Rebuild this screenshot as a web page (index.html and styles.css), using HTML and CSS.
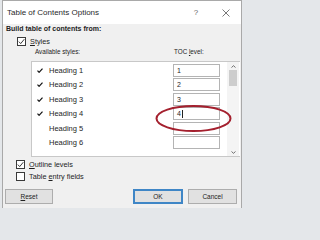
FILE: index.html
```html
<!DOCTYPE html>
<html>
<head>
<meta charset="utf-8">
<link rel="stylesheet" href="styles.css">
</head>
<body>
<div class="dialog">
  <div class="titlebar">
    <span class="title">Table of Contents Options</span>
    <span class="tb-btn help">?</span>
    <span class="tb-btn close"><svg width="8" height="8" viewBox="0 0 8 8"><path d="M0.5 0.5 L7.5 7.5 M7.5 0.5 L0.5 7.5" stroke="#555" stroke-width="0.8" fill="none"/></svg></span>
  </div>
  <div class="content">
    <div class="group-label">Build table of contents from:</div>
    <div class="check-row styles-row">
      <span class="box"><svg width="7" height="7" viewBox="0 0 7 7"><path d="M0.8 3.6 L2.7 5.6 L6.3 1.2" stroke="#222" stroke-width="0.9" fill="none"/></svg></span>
      <span class="check-label"><u>S</u>tyles</span>
    </div>
    <div class="list-head">
      <span class="avail">Available styles:</span>
      <span class="toc">TOC <u>l</u>evel:</span>
    </div>
    <div class="list">
      <div class="rows">
        <div class="row"><span class="tick"><svg width="6" height="5" viewBox="0 0 6 5"><path d="M0.5 2.6 L2.1 4.3 L5.5 0.6" stroke="#111" stroke-width="1.2" fill="none"/></svg></span><span class="name">Heading 1</span><span class="level">1</span></div>
        <div class="row"><span class="tick"><svg width="6" height="5" viewBox="0 0 6 5"><path d="M0.5 2.6 L2.1 4.3 L5.5 0.6" stroke="#111" stroke-width="1.2" fill="none"/></svg></span><span class="name">Heading 2</span><span class="level">2</span></div>
        <div class="row"><span class="tick"><svg width="6" height="5" viewBox="0 0 6 5"><path d="M0.5 2.6 L2.1 4.3 L5.5 0.6" stroke="#111" stroke-width="1.2" fill="none"/></svg></span><span class="name">Heading 3</span><span class="level">3</span></div>
        <div class="row"><span class="tick"><svg width="6" height="5" viewBox="0 0 6 5"><path d="M0.5 2.6 L2.1 4.3 L5.5 0.6" stroke="#111" stroke-width="1.2" fill="none"/></svg></span><span class="name">Heading 4</span><span class="level">4<span class="caret"></span></span></div>
        <div class="row"><span class="tick"></span><span class="name">Heading 5</span><span class="level"></span></div>
        <div class="row"><span class="tick"></span><span class="name">Heading 6</span><span class="level"></span></div>
      </div>
      <div class="scrollbar">
        <span class="arrow"><svg width="5" height="3" viewBox="0 0 5 3"><path d="M0.5 2.5 L2.5 0.7 L4.5 2.5" stroke="#606060" stroke-width="0.9" fill="none"/></svg></span>
        <span class="thumb"></span>
        <span class="track"></span>
        <span class="arrow"><svg width="5" height="3" viewBox="0 0 5 3"><path d="M0.5 0.5 L2.5 2.3 L4.5 0.5" stroke="#606060" stroke-width="0.9" fill="none"/></svg></span>
      </div>
    </div>
    <div class="check-row outline-row">
      <span class="box"><svg width="7" height="7" viewBox="0 0 7 7"><path d="M0.8 3.6 L2.7 5.6 L6.3 1.2" stroke="#222" stroke-width="0.9" fill="none"/></svg></span>
      <span class="check-label"><u>O</u>utline levels</span>
    </div>
    <div class="check-row entry-row">
      <span class="box"></span>
      <span class="check-label">Table <u>e</u>ntry fields</span>
    </div>
    <div class="buttons">
      <span class="btn reset"><u>R</u>eset</span>
      <span class="spacer"></span>
      <span class="btn ok">OK</span>
      <span class="btn cancel">Cancel</span>
    </div>
  </div>
</div>
<svg class="annotation" width="242" height="208" viewBox="0 0 242 208"><ellipse cx="193.5" cy="118.5" rx="37" ry="12.5" fill="none" stroke="#a4202e" stroke-width="2"/></svg>
</body>
</html>
```
FILE: styles.css
```css
html, body {
  margin: 0;
  padding: 0;
}
body {
  width: 242px;
  height: 208px;
  overflow: hidden;
  background: #e4e7ea;
  font-family: "Liberation Sans", Arial, sans-serif;
  color: #1e1e1e;
  position: relative;
}
.dialog {
  margin-left: 2px;
  width: 240px;
  height: 209px;
  box-sizing: border-box;
  border: 1px solid #a9a9a9;
  background: #f0f0f0;
}
.titlebar {
  height: 23px;
  background: #fff;
  display: flex;
  align-items: center;
  padding-left: 4px;
}
.title {
  font-size: 8px;
  color: #2a2a2a;
  flex: 1;
}
.tb-btn {
  width: 30px;
  height: 23px;
  display: flex;
  align-items: center;
  justify-content: center;
}
.help {
  font-size: 8px;
  color: #666;
}
.content {
  display: flex;
  flex-direction: column;
  padding-right: 1px;
}
.group-label {
  font-size: 7px;
  font-weight: bold;
  line-height: 10px;
  padding-left: 3px;
  color: #222;
}
.check-row {
  display: flex;
  align-items: center;
  height: 9px;
}
.box {
  width: 9px;
  height: 9px;
  box-sizing: border-box;
  border: 1px solid #3a3a3a;
  background: #fff;
  display: flex;
  align-items: center;
  justify-content: center;
}
.check-label {
  font-size: 7.3px;
  margin-left: 4px;
}
.styles-row {
  margin-top: 3px;
  padding-left: 14px;
}
.styles-row .check-label {
  margin-left: 4px;
}
.list-head {
  margin-top: 2px;
  height: 8px;
  line-height: 8px;
  font-size: 6.3px;
  display: flex;
  padding-left: 32px;
}
.avail {
  width: 139px;
}
.list {
  margin-top: 5px;
  margin-left: 28px;
  height: 96px;
  box-sizing: border-box;
  border: 1px solid #c8c8c8;
  border-right: none;
  background: #fff;
  display: flex;
}
.rows {
  flex: 1;
  padding-top: 1px;
}
.row {
  height: 14.5px;
  display: grid;
  grid-template-columns: 17px 124px 47px;
  align-items: center;
}
.tick {
  padding-left: 5px;
  display: flex;
  align-items: center;
}
.name {
  font-size: 7.5px;
}
.level {
  height: 13px;
  box-sizing: border-box;
  border: 1px solid #b4b4b4;
  background: #fff;
  font-size: 7px;
  line-height: 11px;
  padding-left: 3px;
  display: flex;
  align-items: center;
}
.caret {
  width: 1px;
  height: 8px;
  background: #222;
  margin-left: 1px;
}
.scrollbar {
  width: 12px;
  margin-right: 1px;
  background: #f4f4f4;
  display: flex;
  flex-direction: column;
  align-items: center;
}
.arrow {
  height: 8px;
  display: flex;
  align-items: center;
  justify-content: center;
}
.thumb {
  width: 8px;
  height: 16px;
  background: #cdcdcd;
  margin-top: 0px;
}
.track {
  flex: 1;
}
.outline-row {
  margin-top: 3px;
  padding-left: 13px;
}
.entry-row {
  margin-top: 3px;
  padding-left: 13px;
}
.buttons {
  margin-top: 8px;
  display: flex;
  gap: 5px;
  padding-left: 2px;
  padding-right: 3px;
}
.spacer {
  flex: 1;
}
.btn {
  height: 15px;
  box-sizing: border-box;
  border: 1px solid #adadad;
  background: #e1e1e1;
  font-size: 6.5px;
  display: flex;
  align-items: center;
  justify-content: center;
  color: #222;
}
.reset {
  width: 48px;
}
.ok {
  width: 50px;
  border: 2px solid #3f86c6;
}
.cancel {
  width: 49px;
}
.annotation {
  position: absolute;
  left: 0;
  top: 0;
  pointer-events: none;
}
```
